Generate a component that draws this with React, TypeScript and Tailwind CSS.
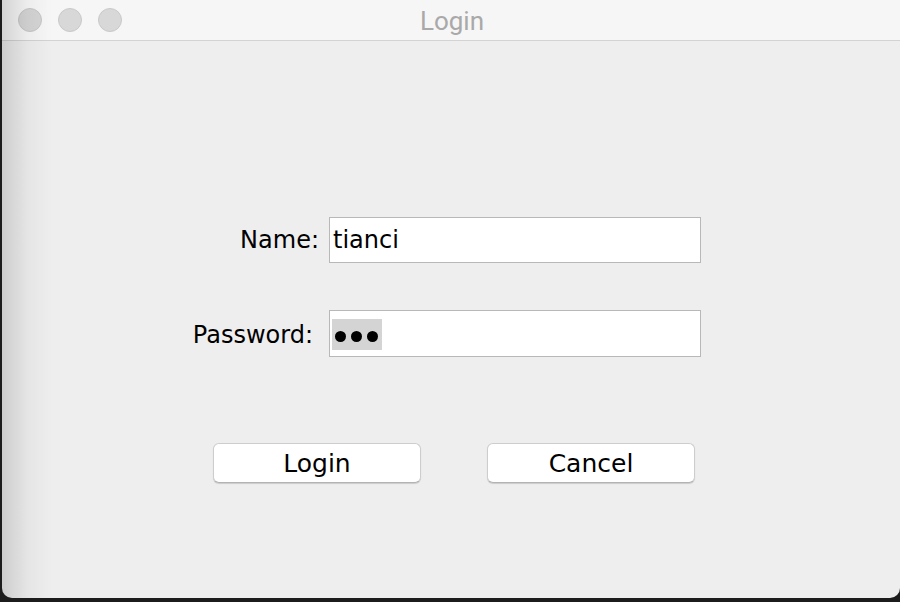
import React from "react";

const font = { fontFamily: '"DejaVu Sans", "Liberation Sans", sans-serif' };

export default function App() {
  return (
    <div className="w-[900px] h-[602px] bg-[#1c1c1c] overflow-hidden">
      <div className="relative h-[598px] w-[898px] ml-[2px] rounded-b-[10px] bg-[#eeeeee] flex flex-col overflow-hidden">
        {/* title bar */}
        <div className="relative h-[41px] shrink-0 bg-[#f6f6f6] border-b border-[#d3d3d3] flex items-center">
          <div className="flex gap-[16px] pl-[16px]">
            <span className="w-[24px] h-[24px] rounded-full bg-[#d5d5d5] border border-[#c6c6c6]" />
            <span className="w-[24px] h-[24px] rounded-full bg-[#d8d8d8] border border-[#c9c9c9]" />
            <span className="w-[24px] h-[24px] rounded-full bg-[#d8d8d8] border border-[#c9c9c9]" />
          </div>
          <div className="absolute inset-0 flex items-center justify-center pl-[2px] pt-[2px]">
            <span className="text-[26px] text-[#a9a9a9]" style={{ fontFamily: 'Roboto, "Liberation Sans", sans-serif' }}>
              Login
            </span>
          </div>
        </div>

        {/* content */}
        <div className="flex flex-col pt-[176px] text-black" style={font}>
          <div className="flex items-center h-[46px]">
            <div className="w-[327px] text-right pr-[10px] text-[24px] leading-none">Name:</div>
            <div className="w-[372px] h-[46px] bg-white border border-[#b8b8b8] flex items-center pl-[3px] text-[24px] leading-none">
              tianci
            </div>
          </div>
          <div className="flex items-center h-[47px] mt-[47px]">
            <div className="w-[327px] text-right pr-[16px] text-[24px] leading-none pt-[2px]">Password:</div>
            <div className="w-[372px] h-[47px] bg-white border border-[#b8b8b8] flex items-center pl-[2px] pt-[1px]">
              <div className="w-[50px] h-[31px] bg-[#d4d4d4] flex items-center gap-[5px] pl-[3px] pt-[4px]">
                <span className="w-[11px] h-[11px] rounded-full bg-black" />
                <span className="w-[11px] h-[11px] rounded-full bg-black" />
                <span className="w-[11px] h-[11px] rounded-full bg-black" />
              </div>
            </div>
          </div>
          <div className="flex gap-[66px] pl-[211px] mt-[86px]">
            <button className="w-[208px] h-[40px] rounded-[6px] bg-white border border-[#cdcdcd] border-b-[#b3b3b3] shadow-[0_1px_1px_rgba(0,0,0,0.15)] text-[25px] leading-none flex items-center justify-center">
              Login
            </button>
            <button className="w-[208px] h-[40px] rounded-[6px] bg-white border border-[#cdcdcd] border-b-[#b3b3b3] shadow-[0_1px_1px_rgba(0,0,0,0.15)] text-[25px] leading-none flex items-center justify-center">
              Cancel
            </button>
          </div>
        </div>

        {/* left edge shading */}
        <div className="pointer-events-none absolute left-0 top-0 bottom-0 w-[50px] bg-gradient-to-r from-[rgba(0,0,0,0.14)] via-[rgba(0,0,0,0.04)] to-transparent" />
      </div>
    </div>
  );
}
